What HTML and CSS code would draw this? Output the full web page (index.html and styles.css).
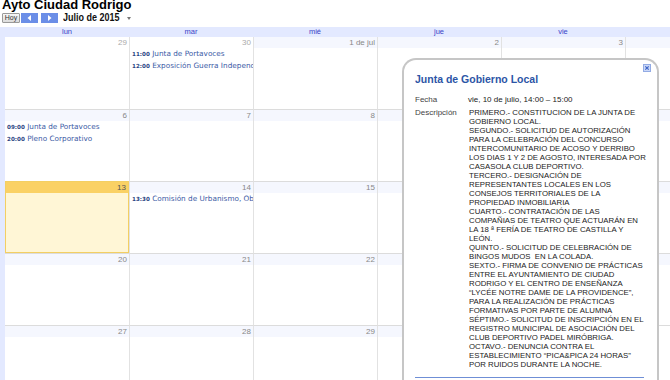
FILE: index.html
```html
<!DOCTYPE html>
<html lang="es">
<head>
<meta charset="utf-8">
<title>Ayto Ciudad Rodrigo</title>
<link rel="stylesheet" href="styles.css">
</head>
<body>
<div class="title">Ayto Ciudad Rodrigo</div>
<div class="toolbar">
  <button class="btn-today">Hoy</button>
  <button class="btn-nav"><svg width="5" height="6" viewBox="0 0 5 6"><path d="M4 0 L0.5 3 L4 6 Z" fill="#fff"/></svg></button>
  <button class="btn-nav"><svg width="5" height="6" viewBox="0 0 5 6"><path d="M1 0 L4.5 3 L1 6 Z" fill="#fff"/></svg></button>
  <span class="month">Julio de 2015</span>
  <span class="caret"></span>
</div>

<div class="calendar">
  <div class="dow-row">
    <div>lun</div><div>mar</div><div>mié</div><div>jue</div><div>vie</div><div>sáb</div><div>dom</div>
  </div>

  <div class="week">
    <div class="cell other"><div class="num">29</div></div>
    <div class="cell other"><div class="num">30</div>
      <div class="ev"><b>11:00</b> Junta de Portavoces</div>
      <div class="ev"><b>12:00</b> Exposición Guerra Independencia</div>
    </div>
    <div class="cell"><div class="num">1 de jul</div></div>
    <div class="cell"><div class="num">2</div></div>
    <div class="cell"><div class="num">3</div></div>
    <div class="cell"><div class="num">4</div></div>
    <div class="cell"><div class="num">5</div></div>
  </div>

  <div class="week">
    <div class="cell"><div class="num">6</div>
      <div class="ev"><b>09:00</b> Junta de Portavoces</div>
      <div class="ev"><b>20:00</b> Pleno Corporativo</div>
    </div>
    <div class="cell"><div class="num">7</div></div>
    <div class="cell"><div class="num">8</div></div>
    <div class="cell"><div class="num">9</div></div>
    <div class="cell"><div class="num">10</div>
      <div class="ev"><b>14:00</b> Junta de Gobierno Local</div>
    </div>
    <div class="cell"><div class="num">11</div></div>
    <div class="cell"><div class="num">12</div></div>
  </div>

  <div class="week">
    <div class="cell today"><div class="num">13</div></div>
    <div class="cell"><div class="num">14</div>
      <div class="ev"><b>13:30</b> Comisión de Urbanismo, Obras</div>
    </div>
    <div class="cell"><div class="num">15</div></div>
    <div class="cell"><div class="num">16</div></div>
    <div class="cell"><div class="num">17</div></div>
    <div class="cell"><div class="num">18</div></div>
    <div class="cell"><div class="num">19</div></div>
  </div>

  <div class="week">
    <div class="cell"><div class="num">20</div></div>
    <div class="cell"><div class="num">21</div></div>
    <div class="cell"><div class="num">22</div></div>
    <div class="cell"><div class="num">23</div></div>
    <div class="cell"><div class="num">24</div></div>
    <div class="cell"><div class="num">25</div></div>
    <div class="cell"><div class="num">26</div></div>
  </div>

  <div class="week">
    <div class="cell"><div class="num">27</div></div>
    <div class="cell"><div class="num">28</div></div>
    <div class="cell"><div class="num">29</div></div>
    <div class="cell"><div class="num">30</div></div>
    <div class="cell"><div class="num">31</div></div>
    <div class="cell other"><div class="num">1 de ago</div></div>
    <div class="cell other"><div class="num">2</div></div>
  </div>
</div>

<div class="popup">
  <span class="close"><svg width="8" height="8" viewBox="0 0 8 8"><rect x="0.5" y="0.5" width="7" height="7" fill="#cbd8f7" stroke="#93abe4"/><path d="M2.3 2.3 L5.7 5.7 M5.7 2.3 L2.3 5.7" stroke="#3f66c8" stroke-width="1.2"/></svg></span>
  <div class="ptitle">Junta de Gobierno Local</div>
  <div class="prow">
    <div class="plabel">Fecha</div>
    <div class="pvalue">vie, 10 de julio, 14:00 – 15:00</div>
  </div>
  <div class="prow">
    <div class="plabel">Descripción</div>
    <div class="pvalue desc">PRIMERO.- CONSTITUCION DE LA JUNTA DE<br>GOBIERNO LOCAL.<br>SEGUNDO.- SOLICITUD DE AUTORIZACIÓN<br>PARA LA CELEBRACIÓN DEL CONCURSO<br>INTERCOMUNITARIO DE ACOSO Y DERRIBO<br>LOS DIAS 1 Y 2 DE AGOSTO, INTERESADA POR<br>CASASOLA CLUB DEPORTIVO.<br>TERCERO.- DESIGNACIÓN DE<br>REPRESENTANTES LOCALES EN LOS<br>CONSEJOS TERRITORIALES DE LA<br>PROPIEDAD INMOBILIARIA<br>CUARTO.- CONTRATACIÓN DE LAS<br>COMPAÑIAS DE TEATRO QUE ACTUARÁN EN<br>LA 18 ª FERÍA DE TEATRO DE CASTILLA Y<br>LEÓN.<br>QUINTO.- SOLICITUD DE CELEBRACIÓN DE<br>BINGOS MUDOS&nbsp; EN LA COLADA.<br>SEXTO.- FIRMA DE CONVENIO DE PRÁCTICAS<br>ENTRE EL AYUNTAMIENTO DE CIUDAD<br>RODRIGO Y EL CENTRO DE ENSEÑANZA<br>“LYCÉE NOTRE DAME DE LA PROVIDENCE”,<br>PARA LA REALIZACIÓN DE PRÁCTICAS<br>FORMATIVAS POR PARTE DE ALUMNA<br>SÉPTIMO.- SOLICITUD DE INSCRIPCIÓN EN EL<br>REGISTRO MUNICIPAL DE ASOCIACIÓN DEL<br>CLUB DEPORTIVO PADEL MIRÓBRIGA.<br>OCTAVO.- DENUNCIA CONTRA EL<br>ESTABLECIMIENTO “PICA&amp;PICA 24 HORAS”<br>POR RUIDOS DURANTE LA NOCHE.</div>
  </div>
  <div class="prule"></div>
</div>
</body>
</html>
```

FILE: styles.css
```css
html, body {
  margin: 0;
  padding: 0;
  overflow: hidden;
  background: #fff;
  font-family: "Liberation Sans", Arial, sans-serif;
}

.title {
  margin-top: -2px;
  padding-left: 2px;
  font-size: 13px;
  font-weight: bold;
  line-height: 13px;
  color: #000;
  white-space: nowrap;
}

.toolbar {
  display: flex;
  align-items: center;
  height: 10px;
  margin-top: 2px;
  padding-left: 2px;
}

.btn-today {
  box-sizing: border-box;
  height: 10px;
  width: 18px;
  margin: 0;
  padding: 0;
  border: 1px solid #9a9a9a;
  border-radius: 1px;
  background: linear-gradient(#f6f6f6, #dcdcdc);
  font-family: "Liberation Sans", Arial, sans-serif;
  font-size: 7px;
  line-height: 8px;
  color: #333;
}

.btn-nav {
  display: flex;
  align-items: center;
  justify-content: center;
  box-sizing: border-box;
  width: 17px;
  height: 10px;
  margin: 0 0 0 1px;
  padding: 0;
  border: none;
  background: #6b8ee7;
}

.btn-nav + .btn-nav {
  margin-left: 3px;
}

.month {
  margin-left: 5px;
  font-size: 9px;
  font-weight: bold;
  line-height: 10px;
  color: #111;
  white-space: nowrap;
  transform: scaleY(1.15);
}

.caret {
  width: 0;
  height: 0;
  margin-left: 7px;
  margin-top: 1px;
  border-left: 2.5px solid transparent;
  border-right: 2.5px solid transparent;
  border-top: 3px solid #777;
}

.calendar {
  margin-top: 4px;
  width: 873px;
  padding-left: 5px;
  background: #e3e9ff;
}

.dow-row {
  display: grid;
  grid-template-columns: repeat(7, 124px);
  height: 10px;
}

.dow-row div {
  text-align: center;
  font-size: 7.5px;
  line-height: 10px;
  color: #3a44c8;
}

.week {
  display: grid;
  grid-template-columns: repeat(7, 124px);
  height: 72px;
}

.cell {
  box-sizing: border-box;
  background: #fff;
  border-left: 1px solid #e2e2e2;
  overflow: hidden;
}

.cell:first-child {
  border-left: none;
}

.week + .week .cell {
  border-top: 1px solid #dcdcdc;
}

.num {
  height: 11px;
  padding-right: 2px;
  background: #f5f7fe;
  text-align: right;
  font-size: 8px;
  line-height: 11px;
  color: #888;
  white-space: nowrap;
}

.other .num {
  background: #fff;
  color: #aaa;
}

.week .cell.today {
  border: 1px solid #f3cf63;
  background: #fff6d6;
}

.today .num {
  background: #fad165;
  color: #555;
}

.ev {
  padding-left: 2px;
  font-family: "DejaVu Sans", Verdana, sans-serif;
  font-size: 7.3px;
  line-height: 11px;
  color: #3d5ca6;
  white-space: nowrap;
  overflow: hidden;
}

.ev b {
  font-size: 5.6px;
  color: #2b4683;
}

.popup {
  position: absolute;
  left: 402px;
  top: 58px;
  box-sizing: border-box;
  width: 257px;
  height: 340px;
  padding: 12px 13px 0 11px;
  background: #fff;
  border: 2px solid #c6c6c6;
  border-bottom: none;
  border-radius: 14px 14px 0 0;
}

.close {
  position: absolute;
  top: 4px;
  right: 6px;
  width: 8px;
  height: 8px;
  line-height: 0;
}

.ptitle {
  font-size: 10.5px;
  font-weight: bold;
  line-height: 14px;
  color: #2c55a6;
  margin-bottom: 9px;
  white-space: nowrap;
}

.prow {
  display: grid;
  grid-template-columns: 53px 1fr;
  margin-bottom: 4px;
}

.plabel {
  font-size: 8px;
  line-height: 9px;
  color: #444;
  white-space: nowrap;
}

.pvalue {
  font-size: 8px;
  line-height: 9px;
  color: #222;
  white-space: nowrap;
}

.pvalue.desc {
  font-size: 7.8px;
  padding-left: 1px;
}

.prule {
  margin-top: 8px;
  border-top: 1px solid #6f8fd6;
}
```
